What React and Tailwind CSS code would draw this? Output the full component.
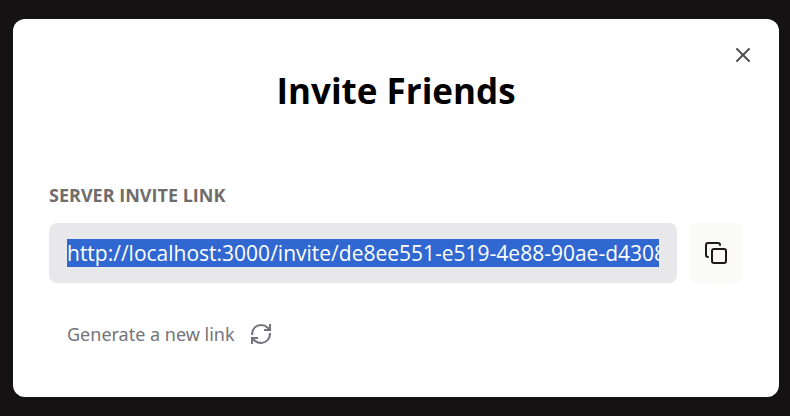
import { useEffect, useRef } from "react";
import { Copy, RefreshCw, X } from "lucide-react";

const inviteUrl = "http://localhost:3000/invite/de8ee551-e519-4e88-90ae-d4308";

export default function App() {
  const inputRef = useRef(null);

  useEffect(() => {
    inputRef.current?.focus({ preventScroll: true });
    inputRef.current?.select();
  }, []);

  return (
    <main className="min-h-screen bg-[#141213] pt-[19px] pr-[11px] pb-[19px] pl-[13px] font-['Open_Sans','Noto_Sans',sans-serif]">
      <section
        role="dialog"
        aria-labelledby="invite-title"
        className="flex flex-col rounded-xl bg-white px-9 pt-6 pb-9 text-black"
      >
        <button
          type="button"
          aria-label="Close"
          className="-mr-3 self-end text-[#4d4d4d]"
        >
          <X size={24} strokeWidth={2} />
        </button>
        <h1 id="invite-title" className="text-center text-[35px] leading-12 font-bold">
          Invite Friends
        </h1>
        <label
          htmlFor="invite-link"
          className="mt-17 text-lg leading-6 font-bold text-[#6f6d6c] uppercase"
        >
          Server invite link
        </label>
        <div className="mt-4 flex items-center gap-3">
          <input
            id="invite-link"
            ref={inputRef}
            type="text"
            readOnly
            defaultValue={inviteUrl}
            className="h-15 min-w-0 flex-1 rounded-lg bg-[#e8e8ea] px-[18px] text-[21px] text-black outline-none selection:bg-[#2f65d0]/99 selection:text-white"
          />
          <button
            type="button"
            aria-label="Copy link"
            className="flex h-15 w-[54px] shrink-0 items-center justify-center rounded-lg bg-[#fafaf9] text-[#1c1917]"
          >
            <Copy size={24} strokeWidth={2} />
          </button>
        </div>
        <button
          type="button"
          className="mt-6 flex h-[54px] items-center gap-3.5 self-start px-[18px] font-['Noto_Sans','Open_Sans',sans-serif] text-lg text-[#74747c]"
        >
          Generate a new link
          <RefreshCw
            size={24}
            strokeWidth={2}
            strokeLinecap="square"
            strokeLinejoin="miter"
          />
        </button>
      </section>
    </main>
  );
}
